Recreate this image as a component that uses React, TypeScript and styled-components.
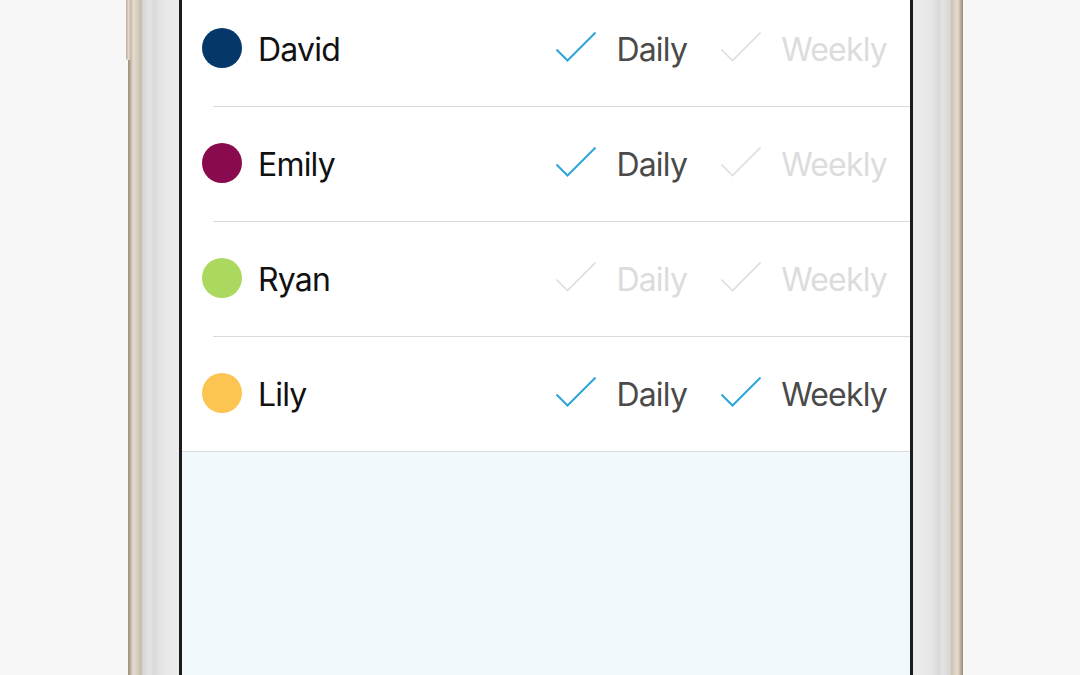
import React from "react";
import styled, { createGlobalStyle } from "styled-components";

const Global = createGlobalStyle`
  html, body { margin: 0; padding: 0; height: 100%; overflow: hidden; }
  body { background: #f7f7f7; font-family: Inter, "Noto Sans", sans-serif; }
  #root { height: 100%; }
`;

const Page = styled.div`
  height: 675px;
  display: flex;
  padding-left: 128px;
  box-sizing: border-box;
`;

const Phone = styled.div`
  position: relative;
  display: flex;
  height: 100%;
`;

const Edge = styled.div<{ $side: "left" | "right" }>`
  width: ${(p) => (p.$side === "left" ? 14 : 12)}px;
  background: linear-gradient(
    ${(p) => (p.$side === "left" ? "to right" : "to left")},
    #9a8e7b 0px,
    #b3a794 2px,
    #e4dace 5px,
    #ddd3c5 8px,
    #cbc0b0 12px,
    #c9beae 14px
  );
`;

const Bezel = styled.div<{ $side: "left" | "right" }>`
  width: ${(p) => (p.$side === "left" ? 37 : 38)}px;
  background: linear-gradient(
    ${(p) => (p.$side === "left" ? "to right" : "to left")},
    #d4d4d4 0px,
    #dcdcdc 4px,
    #e3e3e3 8px,
    #d9d9d9 12px,
    #e6e6e6 20px,
    #ebebeb 30px,
    #ececec 38px
  );
`;

const SideButton = styled.div`
  position: absolute;
  left: -2px;
  top: 0;
  width: 5px;
  height: 60px;
  background: linear-gradient(to right, #b9ad9a, #e2d8ca, #c5baa9);
  border-radius: 0 0 2px 2px;
`;

const Screen = styled.div`
  width: 728px;
  border-left: 3px solid #1c1c1c;
  border-right: 3px solid #1c1c1c;
  background: #f1f9fc;
  display: flex;
  flex-direction: column;
  overflow: hidden;
`;

const List = styled.div`
  background: #ffffff;
  margin-top: -8px;
  border-bottom: 1px solid #d9dcde;
  display: flex;
  flex-direction: column;
`;

const Row = styled.div`
  height: 114px;
  display: flex;
  align-items: center;
  padding: 0 23px 0 20px;
`;

const Divider = styled.div`
  height: 1px;
  margin-left: 31px;
  background: #dadada;
`;

const Dot = styled.div<{ $color: string }>`
  width: 40px;
  height: 40px;
  border-radius: 50%;
  background: ${(p) => p.$color};
  flex-shrink: 0;
  margin-top: -2px;
`;

const Name = styled.div`
  margin-left: 16px;
  font-size: 32px;
  color: #111111;
  flex: 1;
  letter-spacing: -0.8px;
`;

const Options = styled.div`
  display: flex;
  align-items: center;
  gap: 34px;
`;

const Option = styled.div`
  display: flex;
  align-items: center;
  gap: 20px;
`;

const Label = styled.span<{ $on: boolean }>`
  font-size: 32px;
  color: ${(p) => (p.$on ? "#4a4a4a" : "#dcdcdc")};
  letter-spacing: -0.8px;
`;

const CheckSvg = styled.svg`
  display: block;
  width: 40px;
  height: 30px;
  margin-top: -4px;
`;

const Check = ({ on }: { on: boolean }) => (
  <CheckSvg viewBox="0 0 40 30">
    <polyline
      points="0.5,17.5 11.5,28.5 39.5,0.5"
      fill="none"
      stroke={on ? "#2fa5d8" : "#dedede"}
      strokeWidth={on ? 2 : 1.6}
    />
  </CheckSvg>
);

const people = [
  { name: "David", color: "#053869", daily: true, weekly: false },
  { name: "Emily", color: "#8a0a4f", daily: true, weekly: false },
  { name: "Ryan", color: "#abd95f", daily: false, weekly: false },
  { name: "Lily", color: "#fcc551", daily: true, weekly: true },
];

export default function App() {
  return (
    <>
      <Global />
      <Page>
        <Phone>
          <SideButton />
          <Edge $side="left" />
          <Bezel $side="left" />
          <Screen>
            <List>
              {people.map((p, i) => (
                <React.Fragment key={p.name}>
                  <Row>
                    <Dot $color={p.color} />
                    <Name>{p.name}</Name>
                    <Options>
                      <Option>
                        <Check on={p.daily} />
                        <Label $on={p.daily}>Daily</Label>
                      </Option>
                      <Option>
                        <Check on={p.weekly} />
                        <Label $on={p.weekly}>Weekly</Label>
                      </Option>
                    </Options>
                  </Row>
                  {i < people.length - 1 && <Divider />}
                </React.Fragment>
              ))}
            </List>
          </Screen>
          <Bezel $side="right" />
          <Edge $side="right" />
        </Phone>
      </Page>
    </>
  );
}
